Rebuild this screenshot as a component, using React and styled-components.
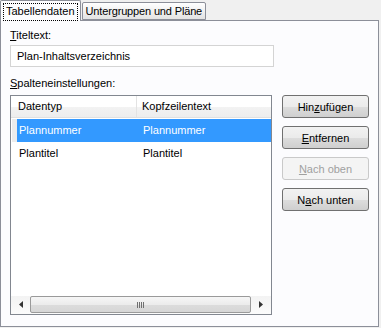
import styled, { createGlobalStyle } from 'styled-components';

const GlobalStyle = createGlobalStyle`
    html, body{
        margin:0;
        padding:0;
        background-color:#f0f0f0;
        font-family:"Liberation Sans", Arial, sans-serif;
        font-size:11px;
        color:#000;
    }
`;

const DialogWrapper = styled.div`
    width:381px;
    height:328px;
    display:flex;
    flex-direction:column;
    background-color:#f0f0f0;
`;

const TabStrip = styled.div`
    display:flex;
    align-items:flex-end;
    height:20px;
    position:relative;
    z-index:1;
`;

const Tab = styled.div`
    box-sizing:border-box;
    height:${p => p.$active ? '21px' : '18px'};
    margin-bottom:${p => p.$active ? '-1px' : '0'};
    padding:${p => p.$active ? '2px 2px 0 2px' : '2px 3px 0 3px'};
    border:1px solid #8c8f99;
    border-bottom:${p => p.$active ? '0' : '1px solid #8c8f99'};
    border-radius:2px 2px 0 0;
    background:${p => p.$active ? '#fcfcfe' : 'linear-gradient(#ffffff, #e3e3e3)'};
    margin-left:${p => p.$active ? '0' : '1px'};
    white-space:nowrap;
    line-height:13px;
    letter-spacing:${p => p.$active ? '0' : '-0.15px'};
`;

const FocusLabel = styled.span`
    display:block;
    padding:1px 2px 2px 2px;
    border:1px dotted #000;
`;

const Panel = styled.div`
    box-sizing:border-box;
    width:379px;
    height:307px;
    border:1px solid #8c8f99;
    background-color:#fcfcfe;
    padding:8px 9px 0 9px;
    display:flex;
    flex-direction:column;
`;

const Label = styled.div`
    line-height:13px;
    height:13px;
    margin-top:${p => p.$gap || 0}px;
    margin-bottom:${p => p.$after || 3}px;

    u{
        text-decoration:underline;
    }
`;

const TextInput = styled.input`
    box-sizing:border-box;
    width:264px;
    height:22px;
    border:1px solid #d4d4d4;
    background-color:#fff;
    padding:0 0 0 6px;
    margin:0;
    font-family:inherit;
    font-size:11px;
    outline:0;
`;

const ContentRow = styled.div`
    display:flex;
    align-items:flex-start;
    gap:10px;
`;

const ListView = styled.div`
    box-sizing:border-box;
    width:264px;
    height:220px;
    border:1px solid #828790;
    background-color:#fff;
    display:flex;
    flex-direction:column;
`;

const ListHeader = styled.div`
    display:grid;
    grid-template-columns:126px 1fr;
    height:21px;
    background:linear-gradient(#ffffff 0%, #ffffff 50%, #f3f3f3 51%, #ededed 100%);
    border-bottom:1px solid #e0e0e0;
`;

const HeaderCell = styled.div`
    line-height:21px;
    padding-left:${p => p.$first ? '7px' : '5px'};
    border-right:${p => p.$first ? '1px solid #e3e3e3' : '0'};
`;

const ListBody = styled.div`
    flex:1;
    padding-top:1px;
`;

const ListRow = styled.div`
    display:grid;
    grid-template-columns:124px 1fr;
    height:23px;
    line-height:23px;
    margin-left:6px;
    background-color:${p => p.$selected ? '#3399ff' : 'transparent'};
    color:${p => p.$selected ? '#fff' : '#000'};
    box-shadow:${p => p.$selected ? '-5px 0 0 #ececec' : 'none'};

    span{
        padding-left:2px;
    }
`;

const ScrollBar = styled.div`
    height:17px;
    display:flex;
    align-items:stretch;
    background:linear-gradient(#f3f3f3, #fbfbfb);
    padding:0 1px 1px 0;
`;

const ScrollArrow = styled.div`
    width:19px;
    display:flex;
    align-items:center;
    justify-content:center;
`;

const ScrollThumb = styled.div`
    flex:1;
    box-sizing:border-box;
    border:1px solid #9a9a9a;
    border-radius:2px;
    background:linear-gradient(#f6f6f6 0%, #ececec 50%, #dcdcdc 51%, #d6d6d6 100%);
    display:flex;
    align-items:center;
    justify-content:center;
    gap:1px;

    i{
        display:block;
        width:1px;
        height:6px;
        background-color:#707070;
    }
`;

const ButtonColumn = styled.div`
    display:flex;
    flex-direction:column;
    gap:8px;
`;

const Button = styled.button`
    box-sizing:border-box;
    width:87px;
    height:23px;
    border:1px solid ${p => p.disabled ? '#c9c9c9' : '#707070'};
    border-radius:3px;
    background:${p => p.disabled ? '#f4f4f4' : 'linear-gradient(#f2f2f2 0%, #ebebeb 50%, #dddddd 51%, #cfcfcf 100%)'};
    color:${p => p.disabled ? '#a0a0a0' : '#000'};
    font-family:inherit;
    font-size:11px;
    padding:0;
    cursor:pointer;
`;

const App = ()=>{
    return(
        <DialogWrapper>
            <GlobalStyle/>
            <TabStrip>
                <Tab $active><FocusLabel>Tabellendaten</FocusLabel></Tab>
                <Tab>Untergruppen und Pläne</Tab>
            </TabStrip>
            <Panel>
                <Label><u>T</u>iteltext:</Label>
                <TextInput defaultValue="Plan-Inhaltsverzeichnis"/>
                <Label $gap={10} $after={5}><u>S</u>palteneinstellungen:</Label>
                <ContentRow>
                    <ListView>
                        <ListHeader>
                            <HeaderCell $first>Datentyp</HeaderCell>
                            <HeaderCell>Kopfzeilentext</HeaderCell>
                        </ListHeader>
                        <ListBody>
                            <ListRow $selected><span>Plannummer</span><span>Plannummer</span></ListRow>
                            <ListRow><span>Plantitel</span><span>Plantitel</span></ListRow>
                        </ListBody>
                        <ScrollBar>
                            <ScrollArrow>
                                <svg width="4" height="7" viewBox="0 0 4 7"><path d="M4 0 L0 3.5 L4 7 Z" fill="#333"/></svg>
                            </ScrollArrow>
                            <ScrollThumb><i/><i/><i/><i/></ScrollThumb>
                            <ScrollArrow>
                                <svg width="4" height="7" viewBox="0 0 4 7"><path d="M0 0 L4 3.5 L0 7 Z" fill="#333"/></svg>
                            </ScrollArrow>
                        </ScrollBar>
                    </ListView>
                    <ButtonColumn>
                        <Button>Hin<u>z</u>ufügen</Button>
                        <Button><u>E</u>ntfernen</Button>
                        <Button disabled><u>N</u>ach oben</Button>
                        <Button>N<u>a</u>ch unten</Button>
                    </ButtonColumn>
                </ContentRow>
            </Panel>
        </DialogWrapper>
    )
}

export default App;
